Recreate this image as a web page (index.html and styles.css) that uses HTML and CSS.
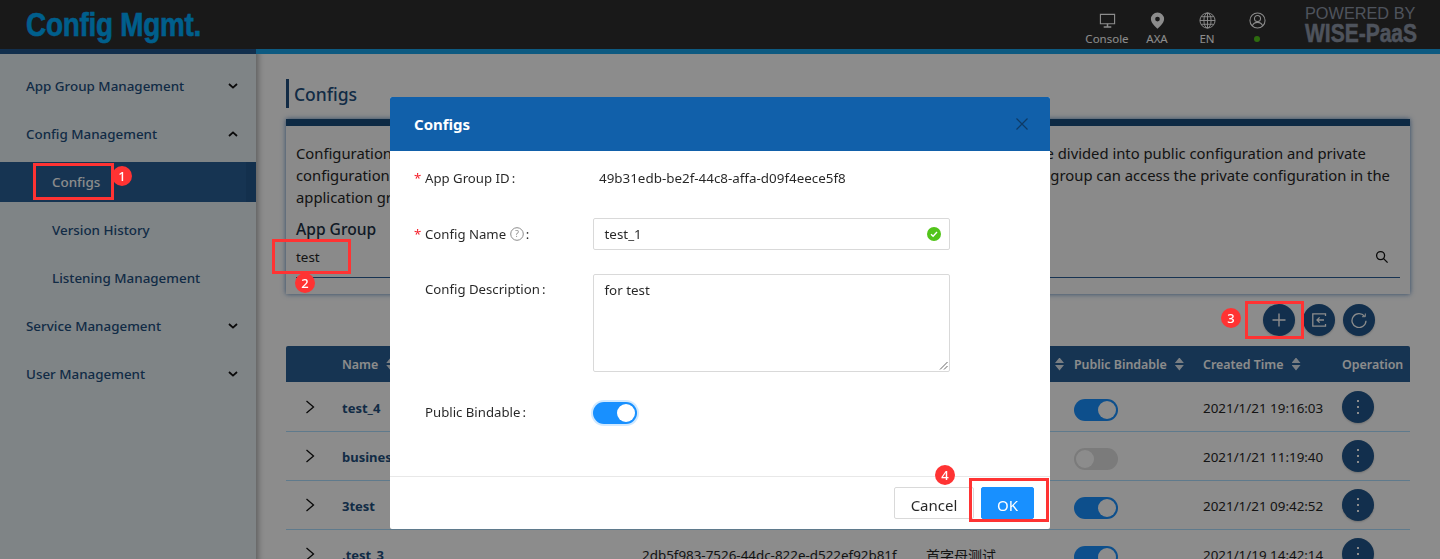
FILE: index.html
```html
<!DOCTYPE html>
<html lang="en">
<head>
    <meta charset="UTF-8">
    <meta name="viewport" content="width=device-width, initial-scale=1.0">
    <title>Config Mgmt.</title>
    <link rel="stylesheet" href="styles.css">
</head>
<body>

    <header class="topbar">
        <div class="logo">Config Mgmt.</div>
        <nav class="top-menu">
            <div class="top-item">
                <svg class="top-icon" viewBox="0 0 18 18"><path d="M1.500 2.500h15v10h-15z" fill="none" stroke="currentColor" stroke-width="1.200"/><path d="M9 12.500v3M5 15.800h8" fill="none" stroke="currentColor" stroke-width="1.600"/></svg>
                <span>Console</span>
            </div>
            <div class="top-item top-axa">
                <svg class="top-icon" viewBox="0 0 18 18"><path fill-rule="evenodd" d="M9 .5a7 7 0 0 0-7 7C2 12.200 9 17.800 9 17.800s7-5.600 7-10.300a7 7 0 0 0-7-7zm0 4.500a2.500 2.500 0 1 1 0 5a2.500 2.500 0 0 1 0-5z" fill="currentColor"/></svg>
                <span>AXA</span>
            </div>
            <div class="top-item top-lang">
                <svg class="top-icon" viewBox="0 0 18 18" fill="none" stroke="currentColor" stroke-width="1"><circle cx="9" cy="9" r="8"/><ellipse cx="9" cy="9" rx="3.800" ry="8"/><path d="M9 1v16M1 9h16M2.200 5h13.600M2.200 13h13.600"/></svg>
                <span>EN</span>
            </div>
            <div class="top-item top-user">
                <svg class="top-icon" viewBox="0 0 18 18" fill="none" stroke="currentColor" stroke-width="1.100"><circle cx="9" cy="9" r="8"/><circle cx="9" cy="7" r="3.200"/><path d="M3.500 14.800c1-2.800 3.200-3.800 5.500-3.800s4.500 1 5.500 3.800"/></svg>
                <i class="online-dot"></i>
            </div>
        </nav>
        <div class="powered">
            <div class="powered-by">POWERED BY</div>
            <div class="powered-name">WISE-PaaS</div>
        </div>
    </header>
    <div class="strip"></div>

    <div class="layout">
        <aside class="sidebar">
            <div class="side-group">App Group Management<svg class="chev" viewBox="0 0 10 6"><path d="M1 1l4 3.600L9 1"/></svg></div>
            <div class="side-group">Config Management<svg class="chev" viewBox="0 0 10 6"><path d="M1 5l4-3.600L9 5"/></svg></div>
            <div class="side-sub active">Configs</div>
            <div class="side-sub">Version History</div>
            <div class="side-sub">Listening Management</div>
            <div class="side-group">Service Management<svg class="chev" viewBox="0 0 10 6"><path d="M1 1l4 3.600L9 1"/></svg></div>
            <div class="side-group">User Management<svg class="chev" viewBox="0 0 10 6"><path d="M1 1l4 3.600L9 1"/></svg></div>
        </aside>

        <main class="content">
            <h2 class="page-title">Configs</h2>

            <section class="intro-card">
                <p>Configuration items are the settings used by applications that run in an application group. Configurations are divided into public configuration and private<br>configuration. Public configuration can be bound by any users. Only the applications in the same application group can access the private configuration in the<br>application group.</p>
                <label class="group-label">App Group</label>
                <div class="group-select">
                    <span>test</span>
                    <svg class="search" viewBox="0 0 14 14" fill="none" stroke="currentColor" stroke-width="1.300"><circle cx="5.600" cy="5.600" r="4"/><path d="M8.600 8.600l4 4"/></svg>
                </div>
            </section>

            <div class="toolbar">
                <button class="round-btn" type="button"><svg viewBox="0 0 16 16" fill="none" stroke="currentColor" stroke-width="1.400"><path d="M8 1.500v13M1.500 8h13"/></svg></button>
                <button class="round-btn" type="button"><svg viewBox="0 0 16 16" fill="none" stroke="currentColor" stroke-width="1.300"><path d="M14.500 4V1.800H1.800v12.400h12.700V12"/><path d="M13 8H6M8.600 5.400L6 8l2.600 2.600"/></svg></button>
                <button class="round-btn" type="button"><svg viewBox="0 0 16 16" fill="none" stroke="currentColor" stroke-width="1.300"><path d="M13.500 4.200A7 7 0 1 0 15 8.800"/><path d="M14.300 1.500v3.200h-3.200" stroke-width="1"/></svg></button>
            </div>

            <div class="table">
                <div class="row head">
                    <span></span>
                    <span>Name<i class="sort"></i></span>
                    <span></span>
                    <span class="desc-head"><i class="sort"></i></span>
                    <span>Public Bindable<i class="sort"></i></span>
                    <span>Created Time<i class="sort"></i></span>
                    <span>Operation</span>
                </div>
                <div class="row">
                    <svg class="expand" viewBox="0 0 10 14"><path d="M1.500 1l7 6-7 6"/></svg>
                    <b class="cell-name">test_4</b><span></span><span></span>
                    <span><i class="switch on"></i></span>
                    <span class="cell-text">2021/1/21 19:16:03</span>
                    <span><button class="round-btn more" type="button"><em></em></button></span>
                </div>
                <div class="row">
                    <svg class="expand" viewBox="0 0 10 14"><path d="M1.500 1l7 6-7 6"/></svg>
                    <b class="cell-name">business</b><span></span><span></span>
                    <span><i class="switch"></i></span>
                    <span class="cell-text">2021/1/21 11:19:40</span>
                    <span><button class="round-btn more" type="button"><em></em></button></span>
                </div>
                <div class="row">
                    <svg class="expand" viewBox="0 0 10 14"><path d="M1.500 1l7 6-7 6"/></svg>
                    <b class="cell-name">3test</b><span></span><span></span>
                    <span><i class="switch on"></i></span>
                    <span class="cell-text">2021/1/21 09:42:52</span>
                    <span><button class="round-btn more" type="button"><em></em></button></span>
                </div>
                <div class="row">
                    <svg class="expand" viewBox="0 0 10 14"><path d="M1.500 1l7 6-7 6"/></svg>
                    <b class="cell-name">.test_3</b>
                    <span class="cell-text">2db5f983-7526-44dc-822e-d522ef92b81f</span>
                    <span class="cell-text cell-cjk">首字母测试</span>
                    <span><i class="switch on"></i></span>
                    <span class="cell-text">2021/1/19 14:42:14</span>
                    <span><button class="round-btn more" type="button"><em></em></button></span>
                </div>
            </div>
        </main>
    </div>

    <div class="mask"></div>

    <div class="modal">
        <div class="modal-head">
            <span>Configs</span>
            <svg class="modal-close" viewBox="0 0 12 12" fill="none" stroke="currentColor" stroke-width="1.200"><path d="M.5.5l11 11M11.500.5l-11 11"/></svg>
        </div>
        <form class="modal-body">
            <div class="form-row id-row">
                <label class="form-label req">App Group ID&#8201;:</label>
                <span class="form-value">49b31edb-be2f-44c8-affa-d09f4eece5f8</span>
            </div>
            <div class="form-row name-row">
                <label class="form-label req">Config Name
                    <svg class="help" viewBox="0 0 14 14"><circle cx="7" cy="7" r="6.300" fill="none" stroke="currentColor"/><text x="7" y="10.200" text-anchor="middle" font-size="9" fill="currentColor">?</text></svg>&#8201;:</label>
                <div class="form-input">
                    <span>test_1</span>
                    <svg class="ok-icon" viewBox="0 0 14 14"><circle cx="7" cy="7" r="7" fill="#52c41a"/><path d="M4 7.200l2.100 2L10 5.100" fill="none" stroke="#fff" stroke-width="1.400"/></svg>
                </div>
            </div>
            <div class="form-row desc-row">
                <label class="form-label">Config Description&#8201;:</label>
                <div class="form-area">for test
                    <svg class="resize" viewBox="0 0 9 9" fill="none" stroke="#666" stroke-width="1"><path d="M8.500 1L1 8.500M8.500 5L5 8.500"/></svg>
                </div>
            </div>
            <div class="form-row bind-row">
                <label class="form-label">Public Bindable&#8201;:</label>
                <i class="form-switch"></i>
            </div>
        </form>
        <div class="modal-foot">
            <button class="btn" type="button">Cancel</button>
            <button class="btn primary" type="button">OK</button>
        </div>
    </div>

    <!-- tutorial marks drawn on top of the screenshot -->
    <div class="mark mark-1"></div>
    <div class="mark mark-2"></div>
    <div class="mark mark-3"></div>
    <div class="mark mark-4"></div>
    <div class="badge badge-1">1</div>
    <div class="badge badge-2">2</div>
    <div class="badge badge-3">3</div>
    <div class="badge badge-4">4</div>

</body>
</html>
```

FILE: styles.css
```css
* {
    box-sizing: border-box;
}

html, body {
    height: 559px;
    overflow: hidden;
}

body {
    margin: 0;
    font-family: "Noto Sans", "Noto Sans CJK SC", sans-serif;
    font-size: 13.400px;
    color: #262626;
    background-color: #fff;
}

/* top bar */
.topbar {
    height: 49px;
    display: flex;
    align-items: center;
    background-color: #2f2f2f;
    color: #fff;
}

.logo {
    margin-left: 26px;
    font-family: "Liberation Sans", sans-serif;
    font-size: 33px;
    font-weight: 700;
    letter-spacing: -0.3px;
    color: #00aeff;
    -webkit-text-stroke: 0.6px #00aeff;
    transform: scaleX(0.845);
    transform-origin: left center;
}

.top-menu {
    margin-left: auto;
    padding-top: 8px;
    display: flex;
}

.top-item {
    width: 50px;
    display: flex;
    flex-direction: column;
    align-items: center;
    font-size: 11.500px;
    line-height: 15px;
}

.top-icon {
    width: 17px;
    height: 17px;
    margin-bottom: 2px;
}

.online-dot {
    width: 6px;
    height: 6px;
    margin-top: 5px;
    border-radius: 50%;
    background-color: #52c41a;
}

.powered {
    margin: 0 23px;
    width: 112px;
    color: #8f98a8;
    font-family: "Liberation Sans", sans-serif;
}

.powered-by {
    font-size: 16.300px;
    line-height: 16px;
    white-space: nowrap;
}

.powered-name {
    font-size: 25px;
    line-height: 24px;
    font-weight: 700;
    -webkit-text-stroke: 0.5px #8f98a8;
    white-space: nowrap;
    transform: scaleX(0.84);
    transform-origin: left center;
}

.strip {
    height: 5px;
    background: linear-gradient(90deg, #21578c 256px, #18a4ec 256px);
}

/* sidebar */
.layout {
    display: flex;
    height: 505px;
}

.sidebar {
    width: 256px;
    flex: none;
    padding-top: 8px;
    background-color: #e8f0f5;
}

.side-group, .side-sub {
    height: 48px;
    display: flex;
    align-items: center;
    font-weight: 500;
    color: #224f7e;
}

.side-group {
    padding: 0 18px 0 26px;
    justify-content: space-between;
}

.side-sub {
    padding-left: 52px;
}

.side-sub.active {
    height: 40px;
    margin: 4px 0;
    background-color: #285f96;
    color: #fff;
    box-shadow: inset -10px 0 0 #24588c;
}

.chev {
    width: 10px;
    height: 6px;
    fill: none;
    stroke: #111;
    stroke-width: 1.800;
}

/* main area */
.content {
    position: relative;
    flex: 1;
    min-width: 0;
    padding: 25px 30px 0;
    box-shadow: inset 8px 0 6px -6px rgba(0, 0, 0, 0.35);
}

.page-title {
    margin: 0 0 11px;
    height: 29px;
    padding-left: 5px;
    border-left: 3px solid #224f7e;
    font-size: 17.500px;
    font-weight: 500;
    line-height: 30px;
    color: #224f7e;
}

.intro-card {
    height: 175px;
    padding: 16px 10px 0;
    border-top: 7px solid #1b4e7d;
    background-color: #fbfbfb;
    box-shadow: 0 0 5px rgba(40, 100, 170, 0.8);
}

.intro-card p {
    margin: 0;
    height: 75px;
    overflow: hidden;
    font-size: 14.800px;
    line-height: 22px;
    white-space: nowrap;
}

.group-label {
    display: block;
    font-size: 15.600px;
    font-weight: 500;
    line-height: 24px;
    color: #1d3145;
}

.group-select {
    height: 37px;
    padding-top: 7px;
    display: flex;
    justify-content: space-between;
    border-bottom: 1px solid #2a5e96;
}

.search {
    width: 14px;
    height: 14px;
    margin: 2px 11px 0 0;
    color: #111;
}

.toolbar {
    height: 52px;
    padding: 10px 35px 0 0;
    display: flex;
    justify-content: flex-end;
    gap: 8px;
}

.round-btn {
    width: 32px;
    height: 32px;
    padding: 0;
    border: none;
    border-radius: 50%;
    display: flex;
    align-items: center;
    justify-content: center;
    background-color: #21578c;
    color: #fff;
    box-shadow: 0 1px 2px rgba(0, 0, 0, 0.2);
}

.round-btn svg {
    width: 16px;
    height: 16px;
}

/* table */
.row {
    height: 49px;
    display: grid;
    grid-template-columns: 56px 300px 284px 148px 129px 139px 68px;
    align-items: center;
    border-bottom: 1px solid #aedfff;
    white-space: nowrap;
}

.row.head {
    height: 36px;
    margin-bottom: 1px;
    border: none;
    border-radius: 2px 2px 0 0;
    background-color: #285f96;
    color: #fff;
    font-size: 12.400px;
    font-weight: 600;
}

.desc-head {
    text-align: right;
    padding-right: 10px;
}

.sort {
    display: inline-block;
    width: 9px;
    height: 13px;
    margin-left: 8px;
    vertical-align: -2px;
    background-color: #fff;
    opacity: 0.85;
    clip-path: path("M4.500 0L9 5.500H0Z M0 7.500H9L4.500 13Z");
}

.expand {
    width: 10px;
    height: 14px;
    margin-left: 19px;
    fill: none;
    stroke: #111;
    stroke-width: 1.300;
}

.cell-name {
    padding-top: 2px;
    color: #224f7e;
    font-size: 13px;
}

.cell-text {
    padding-top: 2px;
}

.cell-cjk {
    font-size: 14px;
}

.switch {
    display: block;
    position: relative;
    width: 44px;
    height: 22px;
    margin-top: 6px;
    border-radius: 11px;
    background-color: #e0e0e0;
}

.switch::after {
    content: "";
    position: absolute;
    top: 2px;
    left: 2px;
    width: 18px;
    height: 18px;
    border-radius: 50%;
    background-color: #fff;
}

.switch.on {
    background-color: #1890ff;
}

.switch.on::after {
    left: 24px;
}

.more em {
    display: block;
    width: 2px;
    height: 2px;
    background-color: #fff;
    box-shadow: 0 -6px 0 #fff, 0 6px 0 #fff;
}

.mask {
    position: fixed;
    inset: 0;
    background-color: rgba(0, 0, 0, 0.45);
}

/* dialog */
.modal {
    position: fixed;
    left: 390px;
    top: 97px;
    width: 660px;
    height: 432px;
    display: flex;
    flex-direction: column;
    border-radius: 2px;
    background-color: #fff;
    color: rgba(0, 0, 0, 0.85);
}

.modal-head {
    height: 54px;
    flex: none;
    padding: 0 22px 0 24px;
    display: flex;
    align-items: center;
    justify-content: space-between;
    border-radius: 2px 2px 0 0;
    background-color: #1160aa;
    color: #fff;
    font-size: 15px;
    font-weight: 700;
}

.modal-close {
    width: 12px;
    height: 12px;
    color: #0e3a66;
}

.modal-body {
    flex: 1;
    padding-left: 24px;
}

.form-row {
    display: flex;
}

.form-label {
    width: 179px;
    flex: none;
    padding-left: 11px;
    position: relative;
    font-size: 13.200px;
}

.form-label.req::before {
    content: "*";
    position: absolute;
    left: 0;
    top: 0;
    color: #f5222d;
}

.id-row {
    padding-top: 18px;
    height: 67px;
    line-height: 18px;
}

.form-value {
    padding-left: 6px;
}

.name-row {
    height: 56px;
}

.name-row .form-label {
    line-height: 32px;
}

.help {
    width: 14px;
    height: 14px;
    vertical-align: -2px;
    color: #8c8c8c;
}

.form-input {
    width: 357px;
    height: 32px;
    padding: 0 10.500px;
    display: flex;
    align-items: center;
    justify-content: space-between;
    border: 1px solid #d9d9d9;
    border-radius: 2px;
}

.ok-icon {
    width: 14px;
    height: 14px;
    margin-right: -2px;
}

.desc-row {
    height: 128px;
}

.desc-row .form-label {
    padding-top: 6px;
}

.form-area {
    position: relative;
    width: 357px;
    height: 98px;
    padding: 6px 10.500px;
    border: 1px solid #d9d9d9;
    border-radius: 2px;
}

.resize {
    position: absolute;
    right: 1px;
    bottom: 1px;
    width: 9px;
    height: 9px;
}

.bind-row .form-label {
    line-height: 20px;
}

.form-switch {
    display: block;
    position: relative;
    width: 44px;
    height: 22px;
    border-radius: 11px;
    background-color: #1890ff;
    box-shadow: 0 0 0 2px rgba(24, 144, 255, 0.2);
}

.form-switch::after {
    content: "";
    position: absolute;
    top: 2px;
    left: 24px;
    width: 18px;
    height: 18px;
    border-radius: 50%;
    background-color: #fff;
}

.modal-foot {
    height: 53px;
    flex: none;
    padding: 10px 16px 0 0;
    display: flex;
    justify-content: flex-end;
    gap: 7px;
    border-top: 1px solid #e8e8e8;
}

.btn {
    height: 32px;
    width: 80px;
    padding: 3px 0 0;
    border: 1px solid #d9d9d9;
    border-radius: 2px;
    background-color: #fff;
    font-family: inherit;
    font-size: 15px;
    color: rgba(0, 0, 0, 0.85);
}

.btn.primary {
    width: 53px;
    border-color: #1890ff;
    background-color: #1890ff;
    color: #fff;
}

/* tutorial marks */
.mark {
    position: fixed;
    border: 3px solid #f33;
}

.mark-1 { left: 33px; top: 163px; width: 81px; height: 37px; }
.mark-2 { left: 272px; top: 239px; width: 79px; height: 35px; }
.mark-3 { left: 1245px; top: 301px; width: 59px; height: 38px; }
.mark-4 { left: 969px; top: 478px; width: 80px; height: 44px; }

.badge {
    position: fixed;
    width: 20px;
    height: 20px;
    border-radius: 50%;
    background-color: #f33;
    color: #fff;
    font-size: 13px;
    font-weight: 500;
    line-height: 20px;
    text-align: center;
}

.badge-1 { left: 112px; top: 166px; }
.badge-2 { left: 295px; top: 273px; }
.badge-3 { left: 1221px; top: 308px; }
.badge-4 { left: 935px; top: 465px; }
```
